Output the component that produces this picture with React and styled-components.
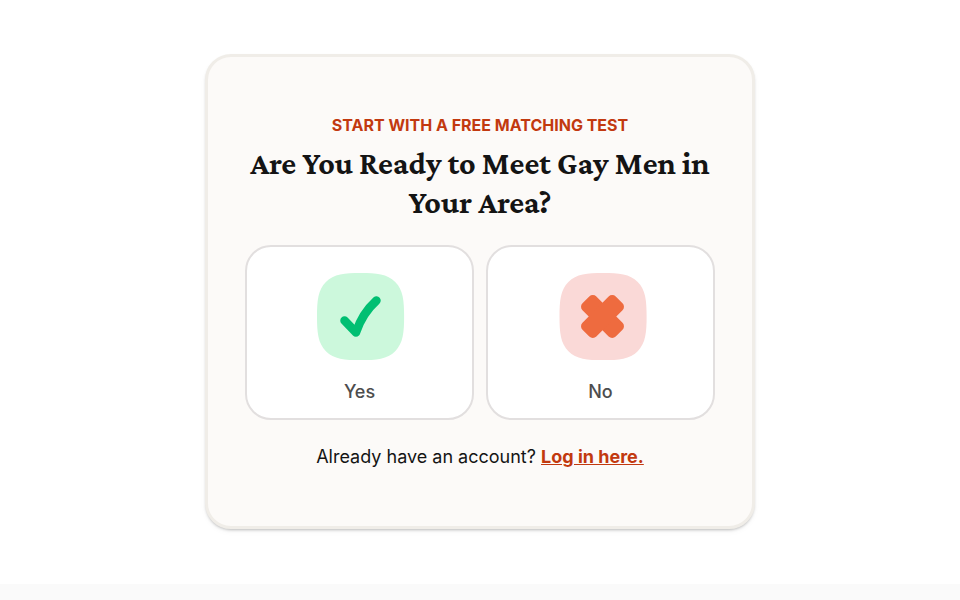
import React from "react";
import styled, { createGlobalStyle } from "styled-components";

const GlobalStyle = createGlobalStyle`
  *, *::before, *::after { box-sizing: border-box; }
  body {
    margin: 0;
    background: #fafafa;
    color: #141414;
    font-family: Inter, "Liberation Sans", sans-serif;
  }
`;

const Hero = styled.main`
  display: flex;
  justify-content: center;
  padding: 54px 16px 55px;
  background: #ffffff;
`;

const Card = styled.section`
  width: 100%;
  max-width: 550px;
  padding: 56px 37px 55px;
  border: 3px solid #f0ede8;
  border-radius: 26px;
  background: #fcfaf8;
  box-shadow: 0 2px 3px -1px rgba(0, 0, 0, 0.25), 0 3px 6px rgba(0, 0, 0, 0.03);
  text-align: center;
`;

const Eyebrow = styled.p`
  margin: 0;
  color: #c2390f;
  font-size: 16px;
  font-weight: 700;
  line-height: 24px;
  text-transform: uppercase;
`;

const Title = styled.h1`
  margin: 7px 0 23px;
  font-family: "Crimson Pro", "Liberation Serif", serif;
  font-size: 32px;
  font-weight: 700;
  line-height: 39px;
`;

const Choices = styled.div`
  display: grid;
  grid-template-columns: 1fr 1fr;
  gap: 12px;
`;

const Choice = styled.button`
  display: flex;
  flex-direction: column;
  align-items: center;
  gap: 17px;
  padding: 24px 16px 13px;
  border: 2px solid #e2dfdf;
  border-radius: 26px;
  background: #ffffff;
  color: #4d4d4d;
  font-family: inherit;
  font-size: 18px;
  font-weight: 500;
  line-height: 27px;
  cursor: pointer;
`;

const Icon = styled.svg`
  display: block;
  width: 96px;
  height: 90px;
`;

const LoginNote = styled.p`
  margin: 23px 0 0;
  font-size: 18px;
  line-height: 28px;
`;

const LoginLink = styled.a`
  color: #c2390f;
  font-weight: 700;
`;

const TILE =
  "M44 0 C60 0 71 1 79 9 C87 17 88 28 88 44 C88 60 87 71 79 79 C71 87 60 88 44 88 C28 88 17 87 9 79 C1 71 0 60 0 44 C0 28 1 17 9 9 C17 1 28 0 44 0Z";

function YesIcon() {
  return (
    <Icon viewBox="0 0 96 90" aria-hidden="true">
      <g transform="translate(5 2)">
        <path d={TILE} transform="scale(0.99)" fill="#ccf8dc" />
        <path
          d="M27.5 47.5 L39 59.5 C43 47 49 37 59.5 27.5"
          fill="none"
          stroke="#00bf72"
          strokeWidth="8.5"
          strokeLinecap="round"
          strokeLinejoin="round"
        />
      </g>
    </Icon>
  );
}

function NoIcon() {
  return (
    <Icon viewBox="0 0 96 90" aria-hidden="true">
      <g transform="translate(6.5 2)">
        <path d={TILE} transform="scale(0.99)" fill="#fad9d7" />
        <g fill="#ee6b3f" transform="translate(43 43.5) rotate(45)">
          <rect x="-23.5" y="-9.8" width="47" height="19.6" rx="5" />
          <rect x="-9.8" y="-23.5" width="19.6" height="47" rx="5" />
        </g>
      </g>
    </Icon>
  );
}

export default function App() {
  return (
    <>
      <GlobalStyle />
      <Hero>
        <Card>
          <Eyebrow>Start with a free matching test</Eyebrow>
          <Title>Are You Ready to Meet Gay Men in Your Area?</Title>
          <Choices>
            <Choice type="button">
              <YesIcon />
              Yes
            </Choice>
            <Choice type="button">
              <NoIcon />
              No
            </Choice>
          </Choices>
          <LoginNote>
            Already have an account? <LoginLink href="#login">Log in here.</LoginLink>
          </LoginNote>
        </Card>
      </Hero>
    </>
  );
}
